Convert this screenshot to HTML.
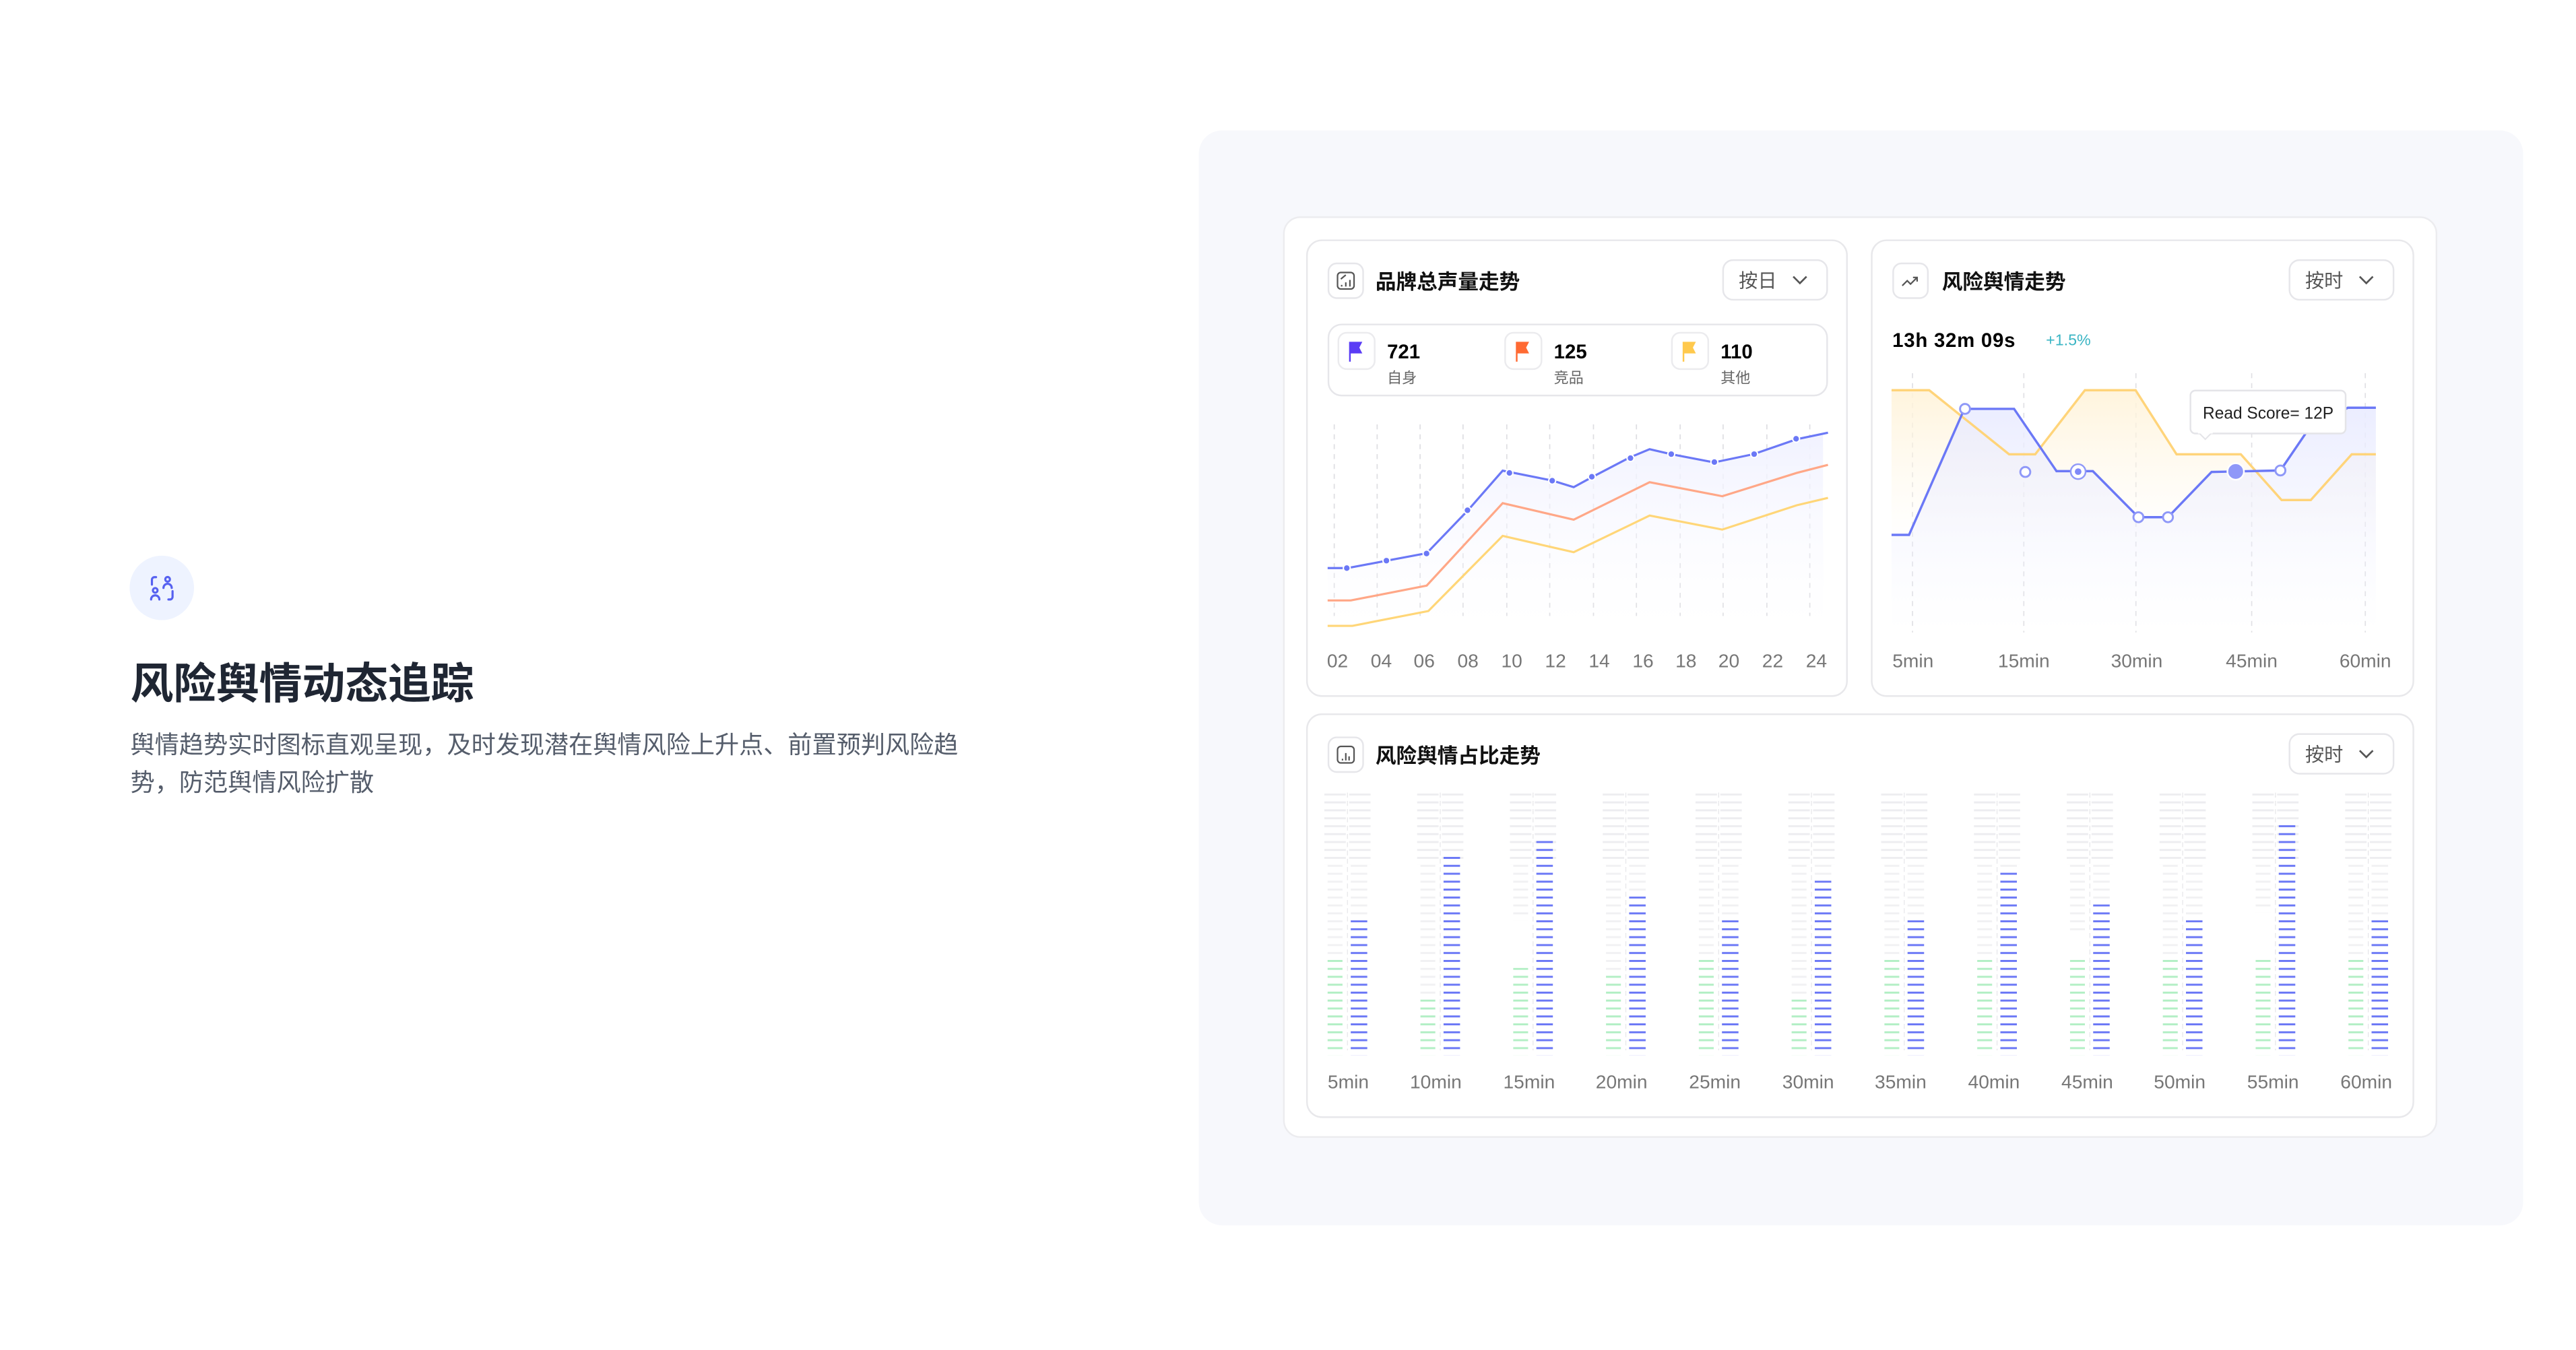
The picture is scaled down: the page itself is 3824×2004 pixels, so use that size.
<!DOCTYPE html>
<html><head><meta charset="utf-8"><style>
html,body{margin:0;padding:0;background:#fff;}
svg{display:block;}
text{font-family:"Liberation Sans","Noto Sans CJK SC",sans-serif;}
</style></head><body>
<svg width="3824" height="2004" viewBox="0 0 1560 817.5" preserveAspectRatio="none" xmlns="http://www.w3.org/2000/svg">
<defs>
<pattern id="pb" patternUnits="userSpaceOnUse" x="0" y="480.5" width="40" height="4.8"><rect x="0" y="0" width="40" height="1.2" rx="0.6" fill="#6b78f6"/></pattern>
<pattern id="pg" patternUnits="userSpaceOnUse" x="0" y="480.5" width="40" height="4.8"><rect x="0" y="0" width="40" height="1.2" rx="0.6" fill="#b3efc5"/></pattern>
<pattern id="pgr" patternUnits="userSpaceOnUse" x="0" y="480.5" width="40" height="4.8"><rect x="0" y="0" width="40" height="1.2" rx="0.6" fill="#ededf0"/></pattern>
<pattern id="pgl" patternUnits="userSpaceOnUse" x="0" y="480.5" width="40" height="4.8"><rect x="0" y="0" width="40" height="1.2" rx="0.6" fill="#f1f1f3"/></pattern>
<linearGradient id="gb" x1="0" y1="0" x2="0" y2="1"><stop offset="0" stop-color="#e9ebff" stop-opacity="0.9"/><stop offset="1" stop-color="#f4f5ff" stop-opacity="0"/></linearGradient>
<linearGradient id="gy" x1="0" y1="0" x2="0" y2="1"><stop offset="0" stop-color="#fff3d9" stop-opacity="0.9"/><stop offset="1" stop-color="#fff8ea" stop-opacity="0"/></linearGradient>
<linearGradient id="gb1" x1="0" y1="0" x2="0" y2="1"><stop offset="0" stop-color="#f1f2ff"/><stop offset="1" stop-color="#fbfbff" stop-opacity="0"/></linearGradient>
</defs>

<circle cx="98" cy="356" r="19.5" fill="#eef3ff"/>
<g fill="none" stroke="#5661f0" stroke-width="1.3" stroke-linecap="round">
<path d="M92,354 v-3 a1.5,1.5 0 0 1 1.5,-1.5 h1"/>
<circle cx="101.5" cy="350.8" r="1.4"/>
<path d="M99,356 a2.5,2.5 0 0 1 5,0"/>
<circle cx="94" cy="357.5" r="1.4"/>
<path d="M91.5,363 a2.5,2.5 0 0 1 5,0"/>
<path d="M104.5,358 v3.5 a1.5,1.5 0 0 1 -1.5,1.5 h-1"/>
</g>
<text x="79" y="423" font-size="26" font-weight="bold" fill="#1f2633">风险舆情动态追踪</text>
<text x="79" y="456" font-size="14.75" fill="#555d6b">舆情趋势实时图标直观呈现，及时发现潜在舆情风险上升点、前置预判风险趋</text>
<text x="79" y="479" font-size="14.75" fill="#555d6b">势，防范舆情风险扩散</text>

<rect x="726" y="79" width="802" height="663" rx="14" fill="#f7f8fc"/>
<rect x="777.5" y="131.5" width="698" height="557" rx="10" fill="#fff" stroke="#ececef" stroke-width="1"/>

<rect x="791.5" y="145.5" width="327" height="276" rx="9" fill="#fff" stroke="#e8e8eb"/>
<rect x="804.5" y="159.5" width="21" height="21" rx="5" fill="#fff" stroke="#e6e6ea"/>
<g fill="none" stroke="#555" stroke-width="0.9"><rect x="810" y="165" width="10" height="10" rx="2"/><path d="M812.5,172.5v1M815,171v2.5M817.5,169.5v4M812,169l3,-2.5"/></g>
<text x="833" y="175" font-size="12.5" font-weight="bold" fill="#111">品牌总声量走势</text>
<rect x="1043.5" y="157.5" width="63" height="24" rx="6" fill="#fff" stroke="#e6e6ea"/>
<text x="1053" y="174" font-size="11.5" fill="#555">按日</text>
<path d="M1086,167.5l4,4l4,-4" fill="none" stroke="#555" stroke-width="1.1"/>

<rect x="804.5" y="196.5" width="302" height="43" rx="8" fill="#fff" stroke="#e6e6ea"/>
<rect x="810.5" y="201.5" width="22" height="22" rx="5" fill="#fff" stroke="#ebebee"/>
<path d="M817,207h8l-1.8,3.5l1.8,3.5h-7v5h-1z" fill="#5a3cf5"/>
<text x="840" y="217" font-size="12" font-weight="bold" fill="#000">721</text>
<text x="840" y="232" font-size="9" fill="#666">自身</text>
<rect x="911.5" y="201.5" width="22" height="22" rx="5" fill="#fff" stroke="#ebebee"/>
<path d="M918,207h8l-1.8,3.5l1.8,3.5h-7v5h-1z" fill="#ff6a33"/>
<text x="941" y="217" font-size="12" font-weight="bold" fill="#000">125</text>
<text x="941" y="232" font-size="9" fill="#666">竞品</text>
<rect x="1012.5" y="201.5" width="22" height="22" rx="5" fill="#fff" stroke="#ebebee"/>
<path d="M1019,207h8l-1.8,3.5l1.8,3.5h-7v5h-1z" fill="#ffc94d"/>
<text x="1042" y="217" font-size="12" font-weight="bold" fill="#000">110</text>
<text x="1042" y="232" font-size="9" fill="#666">其他</text>

<g stroke="#dedee2" stroke-width="0.7" stroke-dasharray="3,3">
<path d="M808,257v116M834,257v116M860,257v116M886,257v116M912.5,257v116M938.5,257v116M965,257v116M991,257v116M1017.5,257v116M1043.5,257v116M1070,257v116M1096,257v116"/>
</g>
<path d="M804,344 L816,344 L840,339.5 L864,335 L889,309 L910,285 L940,291 L953,295 L964,289 L987,277 L999,272 L1012,275 L1038,280 L1062,275 L1088,266 L1104,263 L1104,380 L804,380Z" fill="url(#gb1)"/>
<polyline points="804,379 819,379 865,370 910,324.5 953,334.4 999,312.2 1043,320.7 1088,306 1107,301.5" fill="none" stroke="#ffd678" stroke-width="1.3"/>
<polyline points="804,363.6 818,363.6 864,354.6 910,304.7 953,314.7 999,292 1043,300.5 1088,286.4 1107,281.5" fill="none" stroke="#ffa787" stroke-width="1.3"/>
<polyline points="804,344 816,344 840,339.5 864,335 889,309 910,285 940,291 953,295 964,289 987,277 999,272 1012,275 1038,280 1062,275 1088,266 1107,262" fill="none" stroke="#6b78f6" stroke-width="1.3"/>
<g fill="#6b78f6" stroke="#fff" stroke-width="0.8">
<circle cx="815.6" cy="344" r="2.1"/><circle cx="839.6" cy="339.5" r="2.1"/><circle cx="863.9" cy="335.2" r="2.1"/><circle cx="888.7" cy="309" r="2.1"/><circle cx="914.1" cy="286.4" r="2.1"/><circle cx="940" cy="291.1" r="2.1"/><circle cx="964" cy="288.7" r="2.1"/><circle cx="987.4" cy="277.4" r="2.1"/><circle cx="1012.1" cy="275" r="2.1"/><circle cx="1038.2" cy="279.8" r="2.1"/><circle cx="1062.3" cy="275" r="2.1"/><circle cx="1087.7" cy="265.7" r="2.1"/>
</g>
<g font-size="11.5" fill="#777" text-anchor="middle">
<text x="810" y="404">02</text><text x="836.5" y="404">04</text><text x="862.5" y="404">06</text><text x="889" y="404">08</text><text x="915.5" y="404">10</text><text x="942" y="404">12</text><text x="968.5" y="404">14</text><text x="995" y="404">16</text><text x="1021" y="404">18</text><text x="1047" y="404">20</text><text x="1073.5" y="404">22</text><text x="1100" y="404">24</text>
</g>

<rect x="1133.5" y="145.5" width="328" height="276" rx="9" fill="#fff" stroke="#e8e8eb"/>
<rect x="1146.5" y="159.5" width="21" height="21" rx="5" fill="#fff" stroke="#e6e6ea"/>
<path d="M1152,173l3,-3l2,2l4,-4m-2.5,0h2.5v2.5" fill="none" stroke="#555" stroke-width="0.9"/>
<text x="1176" y="175" font-size="12.5" font-weight="bold" fill="#111">风险舆情走势</text>
<rect x="1386.5" y="157.5" width="63" height="24" rx="6" fill="#fff" stroke="#e6e6ea"/>
<text x="1396" y="174" font-size="11.5" fill="#555">按时</text>
<path d="M1429,167.5l4,4l4,-4" fill="none" stroke="#555" stroke-width="1.1"/>
<text x="1146" y="210" font-size="12" font-weight="bold" fill="#000" letter-spacing="0.3">13h 32m 09s</text>
<text x="1239" y="209" font-size="9.5" fill="#3bb5c4">+1.5%</text>

<g stroke="#e0e0e4" stroke-width="0.7" stroke-dasharray="3,3">
<path d="M1158.2,226v157M1225.6,226v157M1293.5,226v157M1363.6,226v157M1432.4,226v157"/>
</g>
<path d="M1145.5,236.3 L1168.3,236.3 L1216.7,275.1 L1232.5,275.1 L1262.6,236.3 L1293.3,236.3 L1318.1,275.1 L1357,275.1 L1381.7,302.8 L1399.4,302.8 L1424.2,275.1 L1438.8,275.1 L1438.8,330 L1145.5,330Z" fill="url(#gy)"/>
<path d="M1145.5,323.9 L1156.1,323.9 L1189.6,247.6 L1219.7,247.6 L1245.4,285.3 L1267.4,285.3 L1295,313.2 L1312.9,313.2 L1339.3,285.8 L1381,284.9 L1397,261.4 L1421.8,246.9 L1438.8,246.9 L1438.8,383 L1145.5,383Z" fill="url(#gb)"/>
<polyline points="1145.5,236.3 1168.3,236.3 1216.7,275.1 1232.5,275.1 1262.6,236.3 1293.3,236.3 1318.1,275.1 1357,275.1 1381.7,302.8 1399.4,302.8 1424.2,275.1 1438.8,275.1" fill="none" stroke="#ffd47a" stroke-width="1.4"/>
<polyline points="1145.5,323.9 1156.1,323.9 1189.6,247.6 1219.7,247.6 1245.4,285.3 1267.4,285.3 1295,313.2 1312.9,313.2 1339.3,285.8 1381,284.9 1397,261.4 1421.8,246.9 1438.8,246.9" fill="none" stroke="#6b78f6" stroke-width="1.4"/>
<g fill="#fff" stroke="#8f98f8" stroke-width="1.2">
<circle cx="1190" cy="247.6" r="3"/><circle cx="1226.5" cy="285.8" r="3"/><circle cx="1295" cy="313.2" r="3"/><circle cx="1312.9" cy="313.2" r="3"/><circle cx="1381" cy="284.9" r="3"/>
<circle cx="1258.5" cy="285.6" r="4.5" stroke-width="1"/>
</g>
<circle cx="1258.5" cy="285.6" r="2" fill="#7f89f8"/>
<circle cx="1353.9" cy="285.5" r="5" fill="#8f98f8" stroke="#fff" stroke-width="1"/>
<rect x="1326.5" y="236.5" width="94" height="26" rx="3" fill="#fff" stroke="#e4e4e8"/>
<path d="M1332,262.5l3.5,3.5l3.5,-3.5" fill="#fff" stroke="#e4e4e8" stroke-width="0.8"/>
<rect x="1331" y="261" width="9" height="1.5" fill="#fff"/>
<text x="1334" y="253.5" font-size="10" fill="#222">Read Score= 12P</text>
<g font-size="11.5" fill="#777" text-anchor="middle">
<text x="1158.5" y="404">5min</text><text x="1225.6" y="404">15min</text><text x="1294" y="404">30min</text><text x="1363.6" y="404">45min</text><text x="1432.4" y="404">60min</text>
</g>

<rect x="791.5" y="432.5" width="670" height="244" rx="9" fill="#fff" stroke="#e8e8eb"/>
<rect x="804.5" y="446.5" width="21" height="21" rx="5" fill="#fff" stroke="#e6e6ea"/>
<g fill="none" stroke="#555" stroke-width="0.9"><rect x="810" y="452" width="10" height="10" rx="2"/><path d="M813,459.5v1M815,456v4.5M817,458v2.5"/></g>
<text x="833" y="462" font-size="12.5" font-weight="bold" fill="#111">风险舆情占比走势</text>
<rect x="1386.5" y="444.5" width="63" height="24" rx="6" fill="#fff" stroke="#e6e6ea"/>
<text x="1396" y="461" font-size="11.5" fill="#555">按时</text>
<path d="M1429,454.5l4,4l4,-4" fill="none" stroke="#555" stroke-width="1.1"/>

<g font-size="11.5" fill="#777" text-anchor="middle">
<text x="816.5" y="659">5min</text><text x="869.5" y="659">10min</text><text x="926" y="659">15min</text><text x="982" y="659">20min</text><text x="1038.5" y="659">25min</text><text x="1095" y="659">30min</text><text x="1151" y="659">35min</text><text x="1207.5" y="659">40min</text><text x="1264" y="659">45min</text><text x="1320" y="659">50min</text><text x="1376.5" y="659">55min</text><text x="1433" y="659">60min</text>
</g>

<g>
<g transform="translate(816,0)">
<rect x="-14" y="480.5" width="13" height="43.2" fill="url(#pgr)"/><rect x="1" y="480.5" width="13" height="43.2" fill="url(#pgr)"/>
<rect x="-12" y="523.7" width="9" height="115" fill="url(#pgl)"/><rect x="2" y="523.7" width="10" height="115" fill="url(#pgl)"/>
<path d="M0,480v156" stroke="#e6e6e9" stroke-width="0.5" stroke-dasharray="3,2"/>
<rect x="-12" y="581.3" width="9" height="57.6" fill="url(#pg)"/><rect x="2" y="557.3" width="10" height="81.6" fill="url(#pb)"/>
</g>
<g transform="translate(872.2,0)">
<rect x="-14" y="480.5" width="13" height="43.2" fill="url(#pgr)"/><rect x="1" y="480.5" width="13" height="43.2" fill="url(#pgr)"/>
<rect x="-12" y="523.7" width="9" height="115" fill="url(#pgl)"/><rect x="2" y="523.7" width="10" height="115" fill="url(#pgl)"/>
<path d="M0,480v156" stroke="#e6e6e9" stroke-width="0.5" stroke-dasharray="3,2"/>
<rect x="-12" y="605.3" width="9" height="33.6" fill="url(#pg)"/><rect x="2" y="518.9" width="10" height="120" fill="url(#pb)"/>
</g>
<g transform="translate(928.4,0)">
<rect x="-14" y="480.5" width="13" height="43.2" fill="url(#pgr)"/><rect x="1" y="480.5" width="13" height="43.2" fill="url(#pgr)"/>
<rect x="-12" y="523.7" width="9" height="33.6" fill="url(#pgl)"/><rect x="2" y="523.7" width="10" height="115" fill="url(#pgl)"/>
<path d="M0,480v156" stroke="#e6e6e9" stroke-width="0.5" stroke-dasharray="3,2"/>
<rect x="-12" y="586.1" width="9" height="52.8" fill="url(#pg)"/><rect x="2" y="509.3" width="10" height="129.6" fill="url(#pb)"/>
</g>
<g transform="translate(984.6,0)">
<rect x="-14" y="480.5" width="13" height="43.2" fill="url(#pgr)"/><rect x="1" y="480.5" width="13" height="43.2" fill="url(#pgr)"/>
<rect x="-12" y="523.7" width="9" height="115" fill="url(#pgl)"/><rect x="2" y="523.7" width="10" height="115" fill="url(#pgl)"/>
<path d="M0,480v156" stroke="#e6e6e9" stroke-width="0.5" stroke-dasharray="3,2"/>
<rect x="-12" y="590.9" width="9" height="48" fill="url(#pg)"/><rect x="2" y="542.9" width="10" height="96" fill="url(#pb)"/>
</g>
<g transform="translate(1040.8,0)">
<rect x="-14" y="480.5" width="13" height="43.2" fill="url(#pgr)"/><rect x="1" y="480.5" width="13" height="43.2" fill="url(#pgr)"/>
<rect x="-12" y="523.7" width="9" height="115" fill="url(#pgl)"/><rect x="2" y="523.7" width="10" height="115" fill="url(#pgl)"/>
<path d="M0,480v156" stroke="#e6e6e9" stroke-width="0.5" stroke-dasharray="3,2"/>
<rect x="-12" y="581.3" width="9" height="57.6" fill="url(#pg)"/><rect x="2" y="557.3" width="10" height="81.6" fill="url(#pb)"/>
</g>
<g transform="translate(1097,0)">
<rect x="-14" y="480.5" width="13" height="43.2" fill="url(#pgr)"/><rect x="1" y="480.5" width="13" height="43.2" fill="url(#pgr)"/>
<rect x="-12" y="523.7" width="9" height="115" fill="url(#pgl)"/><rect x="2" y="523.7" width="10" height="115" fill="url(#pgl)"/>
<path d="M0,480v156" stroke="#e6e6e9" stroke-width="0.5" stroke-dasharray="3,2"/>
<rect x="-12" y="605.3" width="9" height="33.6" fill="url(#pg)"/><rect x="2" y="533.3" width="10" height="105.6" fill="url(#pb)"/>
</g>
<g transform="translate(1153.2,0)">
<rect x="-14" y="480.5" width="13" height="43.2" fill="url(#pgr)"/><rect x="1" y="480.5" width="13" height="43.2" fill="url(#pgr)"/>
<rect x="-12" y="523.7" width="9" height="115" fill="url(#pgl)"/><rect x="2" y="523.7" width="10" height="115" fill="url(#pgl)"/>
<path d="M0,480v156" stroke="#e6e6e9" stroke-width="0.5" stroke-dasharray="3,2"/>
<rect x="-12" y="581.3" width="9" height="57.6" fill="url(#pg)"/><rect x="2" y="557.3" width="10" height="81.6" fill="url(#pb)"/>
</g>
<g transform="translate(1209.4,0)">
<rect x="-14" y="480.5" width="13" height="43.2" fill="url(#pgr)"/><rect x="1" y="480.5" width="13" height="43.2" fill="url(#pgr)"/>
<rect x="-12" y="523.7" width="9" height="115" fill="url(#pgl)"/><rect x="2" y="523.7" width="10" height="115" fill="url(#pgl)"/>
<path d="M0,480v156" stroke="#e6e6e9" stroke-width="0.5" stroke-dasharray="3,2"/>
<rect x="-12" y="581.3" width="9" height="57.6" fill="url(#pg)"/><rect x="2" y="528.5" width="10" height="110.4" fill="url(#pb)"/>
</g>
<g transform="translate(1265.6,0)">
<rect x="-14" y="480.5" width="13" height="43.2" fill="url(#pgr)"/><rect x="1" y="480.5" width="13" height="43.2" fill="url(#pgr)"/>
<rect x="-12" y="523.7" width="9" height="43.2" fill="url(#pgl)"/><rect x="2" y="523.7" width="10" height="115" fill="url(#pgl)"/>
<path d="M0,480v156" stroke="#e6e6e9" stroke-width="0.5" stroke-dasharray="3,2"/>
<rect x="-12" y="581.3" width="9" height="57.6" fill="url(#pg)"/><rect x="2" y="547.7" width="10" height="91.2" fill="url(#pb)"/>
</g>
<g transform="translate(1321.8,0)">
<rect x="-14" y="480.5" width="13" height="43.2" fill="url(#pgr)"/><rect x="1" y="480.5" width="13" height="43.2" fill="url(#pgr)"/>
<rect x="-12" y="523.7" width="9" height="115" fill="url(#pgl)"/><rect x="2" y="523.7" width="10" height="115" fill="url(#pgl)"/>
<path d="M0,480v156" stroke="#e6e6e9" stroke-width="0.5" stroke-dasharray="3,2"/>
<rect x="-12" y="581.3" width="9" height="57.6" fill="url(#pg)"/><rect x="2" y="557.3" width="10" height="81.6" fill="url(#pb)"/>
</g>
<g transform="translate(1378,0)">
<rect x="-14" y="480.5" width="13" height="43.2" fill="url(#pgr)"/><rect x="1" y="480.5" width="13" height="43.2" fill="url(#pgr)"/>
<rect x="-12" y="523.7" width="9" height="28.8" fill="url(#pgl)"/><rect x="2" y="523.7" width="10" height="115" fill="url(#pgl)"/>
<path d="M0,480v156" stroke="#e6e6e9" stroke-width="0.5" stroke-dasharray="3,2"/>
<rect x="-12" y="581.3" width="9" height="57.6" fill="url(#pg)"/><rect x="2" y="499.7" width="10" height="139.2" fill="url(#pb)"/>
</g>
<g transform="translate(1434.2,0)">
<rect x="-14" y="480.5" width="13" height="43.2" fill="url(#pgr)"/><rect x="1" y="480.5" width="13" height="43.2" fill="url(#pgr)"/>
<rect x="-12" y="523.7" width="9" height="115" fill="url(#pgl)"/><rect x="2" y="523.7" width="10" height="115" fill="url(#pgl)"/>
<path d="M0,480v156" stroke="#e6e6e9" stroke-width="0.5" stroke-dasharray="3,2"/>
<rect x="-12" y="581.3" width="9" height="57.6" fill="url(#pg)"/><rect x="2" y="557.3" width="10" height="81.6" fill="url(#pb)"/>
</g>
</g>
</svg>
</body></html>
